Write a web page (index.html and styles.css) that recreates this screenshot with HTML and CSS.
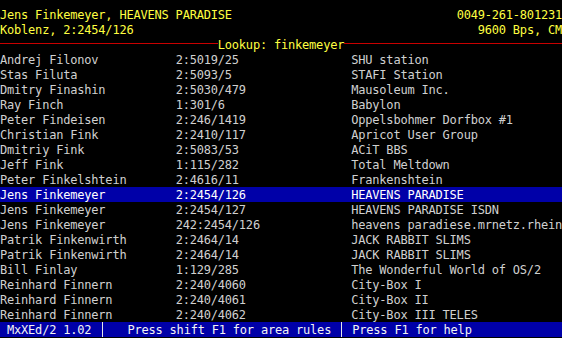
FILE: index.html
```html
<!DOCTYPE html>
<html lang="en">

<head>
    <meta charset="UTF-8">
    <meta name="viewport" content="width=device-width, initial-scale=1.0">
    <title>MxXEd/2 - Lookup</title>
    <link rel="stylesheet" href="styles.css">
</head>

<body>
    <div class="screen">
        <div class="row head">
            <span>Jens Finkemeyer, HEAVENS PARADISE</span>
            <span>0049-261-801231</span>
        </div>
        <div class="row head">
            <span>Koblenz, 2:2454/126</span>
            <span>9600 Bps, CM</span>
        </div>
        <div class="row lookup">
            <span class="rule rule-left"></span>
            <span class="lookup-text">Lookup: finkemeyer</span>
            <span class="rule"></span>
        </div>

        <div class="list">
            <div class="row entry"><span class="name">Andrej Filonov</span><span class="addr">2:5019/25</span><span class="system">SHU station</span></div>
            <div class="row entry"><span class="name">Stas Filuta</span><span class="addr">2:5093/5</span><span class="system">STAFI Station</span></div>
            <div class="row entry"><span class="name">Dmitry Finashin</span><span class="addr">2:5030/479</span><span class="system">Mausoleum Inc.</span></div>
            <div class="row entry"><span class="name">Ray Finch</span><span class="addr">1:301/6</span><span class="system">Babylon</span></div>
            <div class="row entry"><span class="name">Peter Findeisen</span><span class="addr">2:246/1419</span><span class="system">Oppelsbohmer Dorfbox #1</span></div>
            <div class="row entry"><span class="name">Christian Fink</span><span class="addr">2:2410/117</span><span class="system">Apricot User Group</span></div>
            <div class="row entry"><span class="name">Dmitriy Fink</span><span class="addr">2:5083/53</span><span class="system">ACiT BBS</span></div>
            <div class="row entry"><span class="name">Jeff Fink</span><span class="addr">1:115/282</span><span class="system">Total Meltdown</span></div>
            <div class="row entry"><span class="name">Peter Finkelshtein</span><span class="addr">2:4616/11</span><span class="system">Frankenshtein</span></div>
            <div class="row entry current"><span class="name">Jens Finkemeyer</span><span class="addr">2:2454/126</span><span class="system">HEAVENS PARADISE</span></div>
            <div class="row entry"><span class="name">Jens Finkemeyer</span><span class="addr">2:2454/127</span><span class="system">HEAVENS PARADISE ISDN</span></div>
            <div class="row entry"><span class="name">Jens Finkemeyer</span><span class="addr">242:2454/126</span><span class="system">heavens paradiese.mrnetz.rhein</span></div>
            <div class="row entry"><span class="name">Patrik Finkenwirth</span><span class="addr">2:2464/14</span><span class="system">JACK RABBIT SLIMS</span></div>
            <div class="row entry"><span class="name">Patrik Finkenwirth</span><span class="addr">2:2464/14</span><span class="system">JACK RABBIT SLIMS</span></div>
            <div class="row entry"><span class="name">Bill Finlay</span><span class="addr">1:129/285</span><span class="system">The Wonderful World of OS/2</span></div>
            <div class="row entry"><span class="name">Reinhard Finnern</span><span class="addr">2:240/4060</span><span class="system">City-Box I</span></div>
            <div class="row entry"><span class="name">Reinhard Finnern</span><span class="addr">2:240/4061</span><span class="system">City-Box II</span></div>
            <div class="row entry"><span class="name">Reinhard Finnern</span><span class="addr">2:240/4062</span><span class="system">City-Box III TELES</span></div>
        </div>

        <div class="row status">
            <span class="st-version">MxXEd/2 1.02</span>
            <span class="st-rules">Press shift F1 for area rules</span>
            <span class="st-help">Press F1 for help</span>
        </div>
    </div>
</body>

</html>
```

FILE: styles.css
```css
:root {
    --cell: 7.025px;
    --blue: #0000a8;
    --yellow: #ffff40;
    --grey: #d0d0d0;
    --red: #c80000;
}

html,
body {
    margin: 0;
    background-color: #000;
}

body {
    font-family: "DejaVu Sans Mono", "Liberation Mono", monospace;
    font-size: 12px;
    letter-spacing: -0.2px;
}

.screen {
    width: 562px;
    padding-top: 7px;
}

.row {
    display: flex;
    height: 15px;
    box-sizing: border-box;
    padding-top: 2px;
    line-height: 13px;
    white-space: pre;
    overflow: hidden;
}

.head {
    justify-content: space-between;
    color: var(--yellow);
}

.lookup {
    align-items: flex-start;
}

.rule {
    flex: 1;
    height: 1px;
    margin-top: 4px;
    background-color: var(--red);
}

.rule-left {
    flex: none;
    width: calc(31 * var(--cell));
}

.lookup-text {
    color: var(--yellow);
}

.entry {
    color: var(--grey);
}

.entry.current {
    background-color: var(--blue);
    color: #fff;
}

.name,
.addr {
    flex: none;
    width: calc(25 * var(--cell));
}

.system {
    flex: 1;
    overflow: hidden;
}

.status {
    background-color: var(--blue);
    color: #f4f4f4;
    padding-top: 0;
}

.status span {
    padding-top: 2px;
    box-sizing: border-box;
}

.st-version {
    width: calc(14.5 * var(--cell));
    padding-left: var(--cell);
    box-sizing: border-box;
}

.st-rules {
    width: calc(34 * var(--cell));
    padding-left: calc(3.5 * var(--cell));
    border-left: 1px solid #e8e8e8;
}

.st-help {
    flex: 1;
    padding-left: calc(1.5 * var(--cell));
    border-left: 1px solid #e8e8e8;
}
```
